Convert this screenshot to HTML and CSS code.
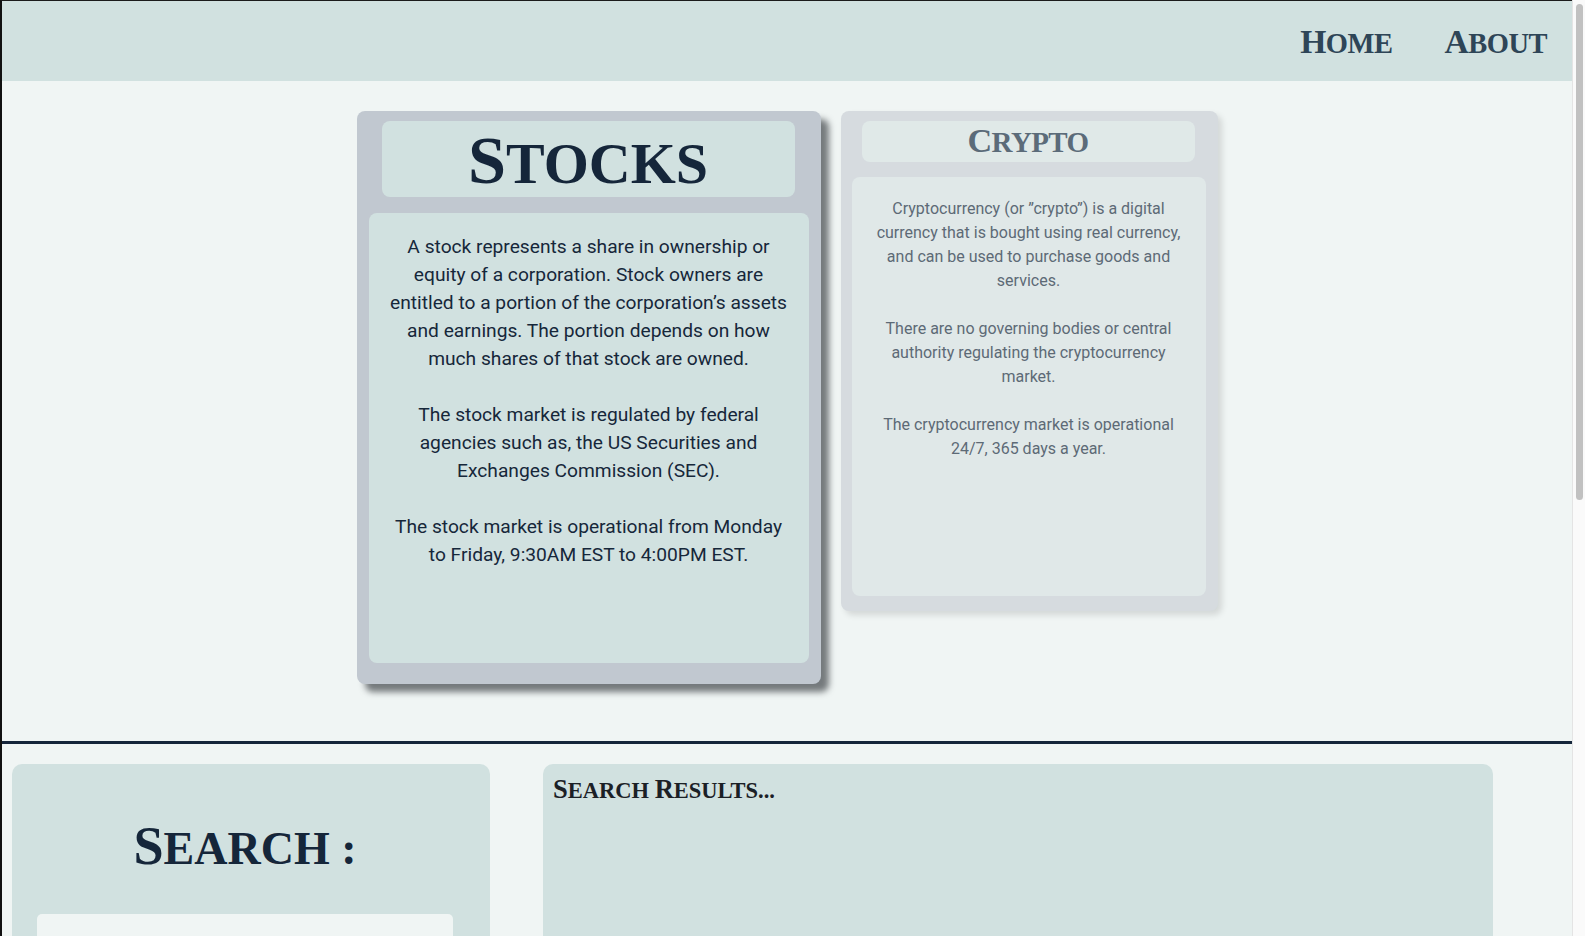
FILE: index.html
```html
<!DOCTYPE html>
<html lang="en">
<head>
<meta charset="utf-8">
<title>Stocks &amp; Crypto</title>
<link rel="stylesheet" href="styles.css">
</head>
<body>
<div class="page">
  <header class="nav">
    <a class="nav-link sc" href="#">Home</a>
    <a class="nav-link sc" href="#">About</a>
  </header>

  <main class="hero">
    <section class="card card-active">
      <div class="card-head"><h1 class="sc card-title">Stocks</h1></div>
      <div class="card-body">
        <p>A stock represents a share in ownership or equity of a corporation. Stock owners are entitled to a portion of the corporation’s assets and earnings. The portion depends on how much shares of that stock are owned.</p>
        <p>The stock market is regulated by federal agencies such as, the US Securities and Exchanges Commission (SEC).</p>
        <p>The stock market is operational from Monday to Friday, 9:30AM EST to 4:00PM EST.</p>
      </div>
    </section>
    <section class="card card-dim">
      <div class="card-head"><h1 class="sc card-title">Crypto</h1></div>
      <div class="card-body">
        <p>Cryptocurrency (or ”crypto”) is a digital currency that is bought using real currency, and can be used to purchase goods and services.</p>
        <p>There are no governing bodies or central authority regulating the cryptocurrency market.</p>
        <p>The cryptocurrency market is operational 24/7, 365 days a year.</p>
      </div>
    </section>
  </main>

  <section class="search-area">
    <div class="search-panel">
      <h2 class="sc search-title">Search :</h2>
      <input class="search-input" type="text" aria-label="Search">
    </div>
    <div class="results-panel">
      <h3 class="sc results-title">Search <span class="cap">R</span>esults...</h3>
    </div>
  </section>
</div>
<div class="scrollbar" aria-hidden="true"><div class="scrollbar-thumb"></div></div>
</body>
</html>
```

FILE: styles.css
```css
html, body {
  margin: 0;
  padding: 0;
}

body {
  background: #f0f5f4;
  font-family: Roboto, "Liberation Sans", sans-serif;
  color: #16273a;
}

.page {
  border-top: 1px solid #1b1b1b;
  border-left: 2px solid #111;
  margin-right: 13px;
}

/* Scrollbar drawn over the right edge, as in the capture */
.scrollbar {
  position: fixed;
  top: 0;
  right: 0;
  width: 13px;
  height: 100%;
  background: #fafafa;
  border-left: 1px solid #e4e4e4;
  box-sizing: border-box;
}
.scrollbar-thumb {
  margin: 4px 0 0 3px;
  width: 7px;
  height: 496px;
  border-radius: 4px;
  background: #c1c1c1;
}

.sc {
  font-family: "Liberation Serif", "Times New Roman", serif;
  font-weight: bold;
  text-transform: uppercase;
  margin: 0;
}
.sc::first-letter,
.sc .cap {
  font-size: 1.18em;
}

/* Nav */
.nav {
  height: 80px;
  background: #d1e1e0;
  display: flex;
  justify-content: flex-end;
  align-items: center;
  gap: 52px;
  padding-right: 25px;
}
.nav-link {
  font-size: 28.5px;
  color: #2e4557;
  text-decoration: none;
  letter-spacing: -0.5px;
  line-height: 1;
  margin-top: 2px;
}

/* Hero cards */
.hero {
  height: 663px;
  box-sizing: border-box;
  padding-top: 30px;
  display: flex;
  justify-content: center;
  align-items: flex-start;
  gap: 20px;
  border-bottom: 3px solid #15253a;
}

.card {
  box-sizing: border-box;
  border-radius: 8px;
  display: flex;
  flex-direction: column;
}
.card-head {
  display: flex;
  align-items: center;
  justify-content: center;
  border-radius: 8px;
}
.card-body {
  flex: 1;
  border-radius: 8px;
  text-align: center;
}
.card-body p {
  margin: 0;
}

.card-active {
  width: 464px;
  height: 573px;
  background: #c1c8d0;
  padding: 10px 12px 21px;
  box-shadow: 8px 8px 6px rgba(35, 40, 45, 0.6);
}
.card-active .card-head {
  height: 76px;
  margin: 0 14px 0 13px;
  background: #d1e1e0;
}
.card-active .card-title {
  font-size: 58px;
  color: #15263a;
  line-height: 1;
  margin-top: 3px;
}
.card-active .card-body {
  margin-top: 16px;
  background: #d1e1e0;
  padding: 20px 20px 19px;
  font-size: 19.2px;
  line-height: 28px;
  color: #16273a;
}
.card-active .card-body p + p {
  margin-top: 28px;
}

.card-dim {
  width: 377px;
  height: 500px;
  background: #d6dbdf;
  padding: 10px 12px 15px 11px;
  box-shadow: 4px 4px 6px rgba(0, 0, 0, 0.12);
}
.card-dim .card-head {
  height: 41px;
  margin: 0 11px 0 10px;
  background: #e0e9e8;
}
.card-dim .card-title {
  font-size: 29px;
  letter-spacing: -0.6px;
  color: #5b6b79;
  line-height: 1;
}
.card-dim .card-body {
  margin-top: 15px;
  background: #e0e8e8;
  padding: 20px 20px 19px;
  font-size: 16px;
  line-height: 24px;
  color: #5d6a76;
}
.card-dim .card-body p + p {
  margin-top: 24px;
}

/* Search */
.search-area {
  display: flex;
  align-items: flex-start;
  gap: 53px;
  padding: 20px 0 40px 10px;
}
.search-panel {
  width: 478px;
  height: 960px;
  box-sizing: border-box;
  background: #d1e1e0;
  border-radius: 10px;
  padding-top: 52px;
}
.search-title {
  font-size: 46px;
  line-height: 60px;
  text-align: center;
  color: #15263a;
  padding-right: 12px;
}
.search-input {
  display: block;
  margin: 35px 0 0 25px;
  width: 416px;
  height: 44px;
  box-sizing: border-box;
  border: none;
  border-radius: 5px;
  background: #f0f5f4;
}

.results-panel {
  width: 950px;
  height: 960px;
  box-sizing: border-box;
  background: #d1e1e0;
  border-radius: 10px;
  padding: 9px 10px 10px;
}
.results-title {
  font-size: 22.5px;
  line-height: 32px;
  color: #1b2026;
}
```
